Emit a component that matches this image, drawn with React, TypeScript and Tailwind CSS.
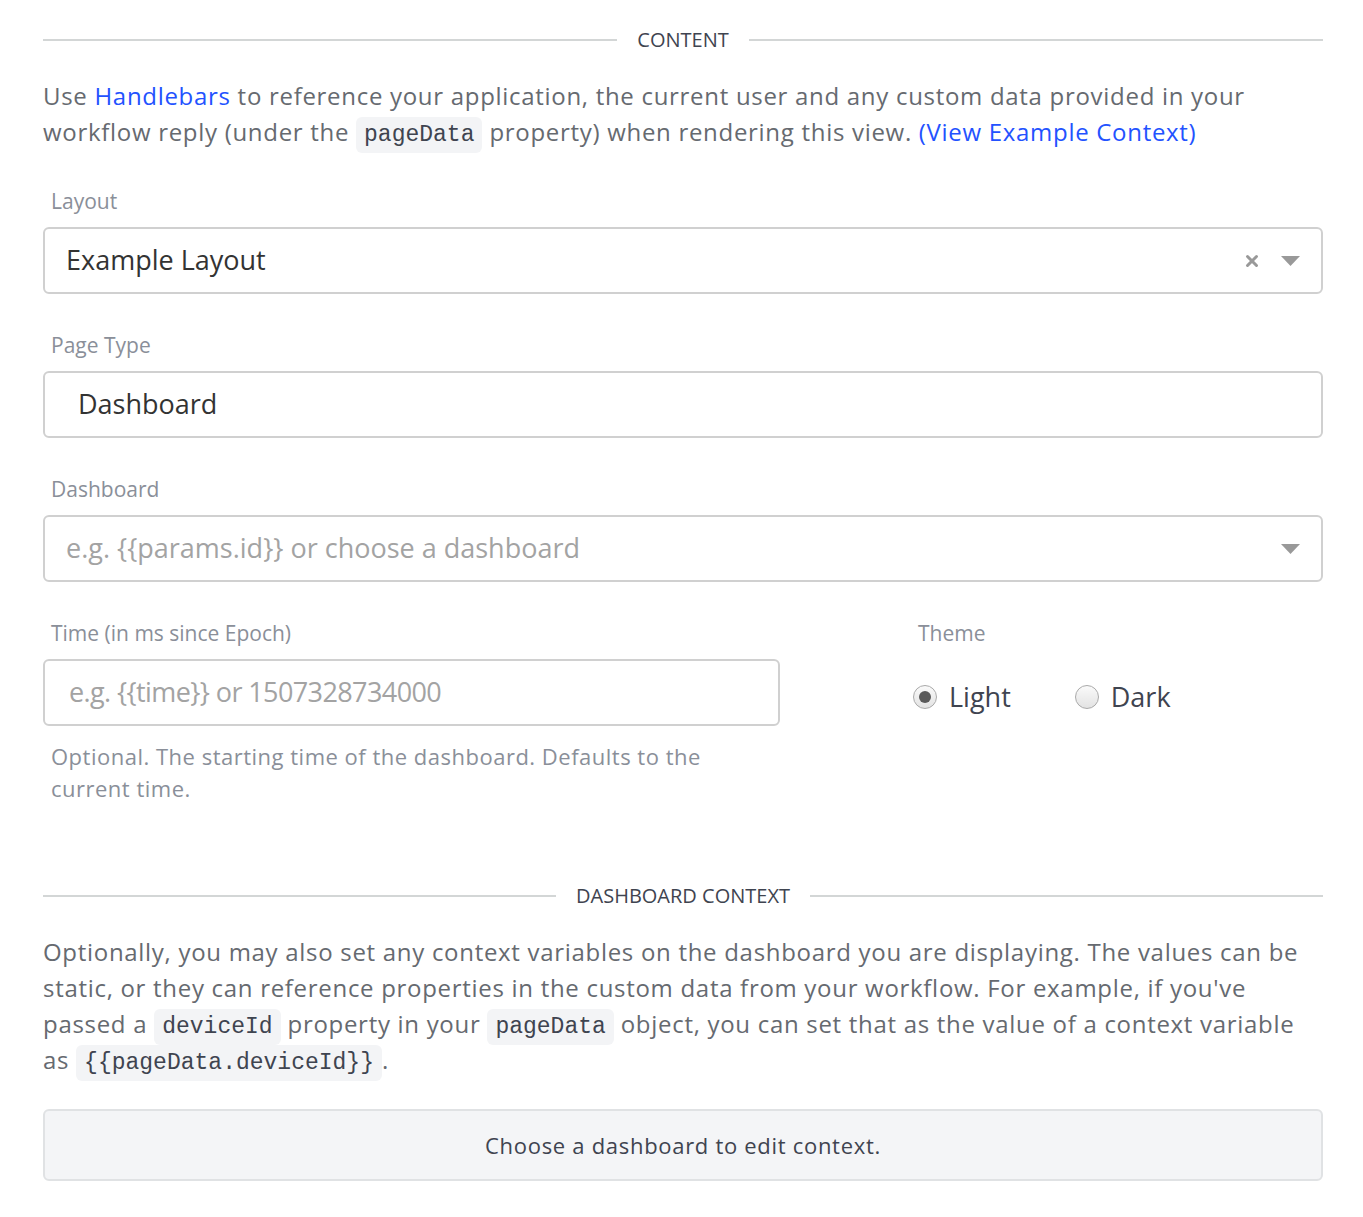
import { X } from "lucide-react";

const font = { fontFamily: "'Open Sans', 'Noto Sans', sans-serif" };

const SectionTitle = ({ title }: { title: string }) => (
  <div className="flex items-center gap-5">
    <div className="h-[2px] flex-1 bg-[#d3d6d6]" />
    <span className="text-[20px] leading-[28px] uppercase text-[#3f4450]">{title}</span>
    <div className="h-[2px] flex-1 bg-[#d3d6d6]" />
  </div>
);

const Code = ({ children }: { children: string }) => (
  <code className="rounded-md bg-[#f3f4f6] px-2 py-[5px] font-['Liberation_Mono',monospace] text-[23px] leading-none tracking-normal text-[#3f4450]">
    {children}
  </code>
);

const Label = ({ children }: { children: string }) => (
  <div className="px-2 text-[21px] leading-[28px] text-[#8a8f99]">{children}</div>
);

const Caret = () => (
  <svg width="19" height="10" viewBox="0 0 19 10">
    <path d="M0 0h19L9.5 10z" fill="#999" />
  </svg>
);

const Radio = ({ checked, label }: { checked?: boolean; label: string }) => (
  <label className="flex items-center gap-3">
    <span className="flex h-6 w-6 items-center justify-center rounded-full border border-[#aaa] bg-gradient-to-b from-[#fafafa] to-[#e3e3e3]">
      {checked && <span className="h-3 w-3 rounded-full bg-[#5a5a5a]" />}
    </span>
    <span className="text-[27px] leading-[36px] text-[#3f4450]">{label}</span>
  </label>
);

export default function App() {
  return (
    <div className="min-h-screen bg-white pl-[43px] pr-[40px] pt-[26px] pb-10" style={font}>
      <SectionTitle title="Content" />

      <p className="mt-[24px] text-[24px] leading-[36px] tracking-[0.7px] text-[#666a70]">
        Use <a className="text-[#2352ff]">Handlebars</a> to reference your application, the current user and
        any custom data provided in your workflow reply (under the <Code>pageData</Code> property) when
        rendering this view. <a className="text-[#2352ff]">(View Example Context)</a>
      </p>

      <div className="mt-[37px] flex flex-col gap-[12px]">
        <Label>Layout</Label>
        <div className="flex h-[67px] items-center rounded-md border-2 border-[#d0d0d0] pl-[21px] pr-[21px]">
          <span className="flex-1 text-[27px] text-[#333]">Example Layout</span>
          <X size={18} strokeWidth={4} className="mr-[20px] text-[#999]" />
          <Caret />
        </div>
      </div>

      <div className="mt-[37px] flex flex-col gap-[12px]">
        <Label>Page Type</Label>
        <div className="flex h-[67px] items-center rounded-md border-2 border-[#d0d0d0] pl-[33px]">
          <span className="text-[27px] text-[#333]">Dashboard</span>
        </div>
      </div>

      <div className="mt-[37px] flex flex-col gap-[12px]">
        <Label>Dashboard</Label>
        <div className="flex h-[67px] items-center rounded-md border-2 border-[#d0d0d0] pl-[21px] pr-[21px]">
          <span className="flex-1 text-[27px] text-[#a3a3a3]">e.g. {"{{params.id}}"} or choose a dashboard</span>
          <Caret />
        </div>
      </div>

      <div className="mt-[37px] flex">
        <div className="flex w-[737px] flex-col">
          <Label>Time (in ms since Epoch)</Label>
          <div className="mt-[12px] flex h-[67px] items-center rounded-md border-2 border-[#d0d0d0] pl-6">
            <span className="text-[27px] tracking-[-0.6px] text-[#a3a3a3]">e.g. {"{{time}}"} or 1507328734000</span>
          </div>
          <p className="mt-[14px] px-2 text-[22px] leading-[32px] tracking-[0.5px] text-[#8a8f99]">
            Optional. The starting time of the dashboard. Defaults to the current time.
          </p>
        </div>
        <div className="ml-[130px] flex flex-col gap-[32px]">
          <Label>Theme</Label>
          <div className="flex items-center gap-[64px] pl-[3px]">
            <Radio checked label="Light" />
            <Radio label="Dark" />
          </div>
        </div>
      </div>

      <div className="mt-[78px]">
        <SectionTitle title="Dashboard Context" />
      </div>

      <p className="mt-[24px] text-[24px] leading-[36px] tracking-[0.7px] text-[#666a70]">
        Optionally, you may also set any context variables on the dashboard you are displaying. The values can
        be static, or they can reference properties in the custom data from your workflow. For example, if
        you've passed a <Code>deviceId</Code> property in your <Code>pageData</Code> object, you can set that
        as the value of a context variable as <Code>{"{{pageData.deviceId}}"}</Code>.
      </p>

      <div className="mt-[31px] flex h-[72px] items-center justify-center rounded-md border-2 border-[#e0e2e4] bg-[#f4f5f7] text-[22px] tracking-[0.7px] text-[#3f4450]">
        Choose a dashboard to edit context.
      </div>
    </div>
  );
}
